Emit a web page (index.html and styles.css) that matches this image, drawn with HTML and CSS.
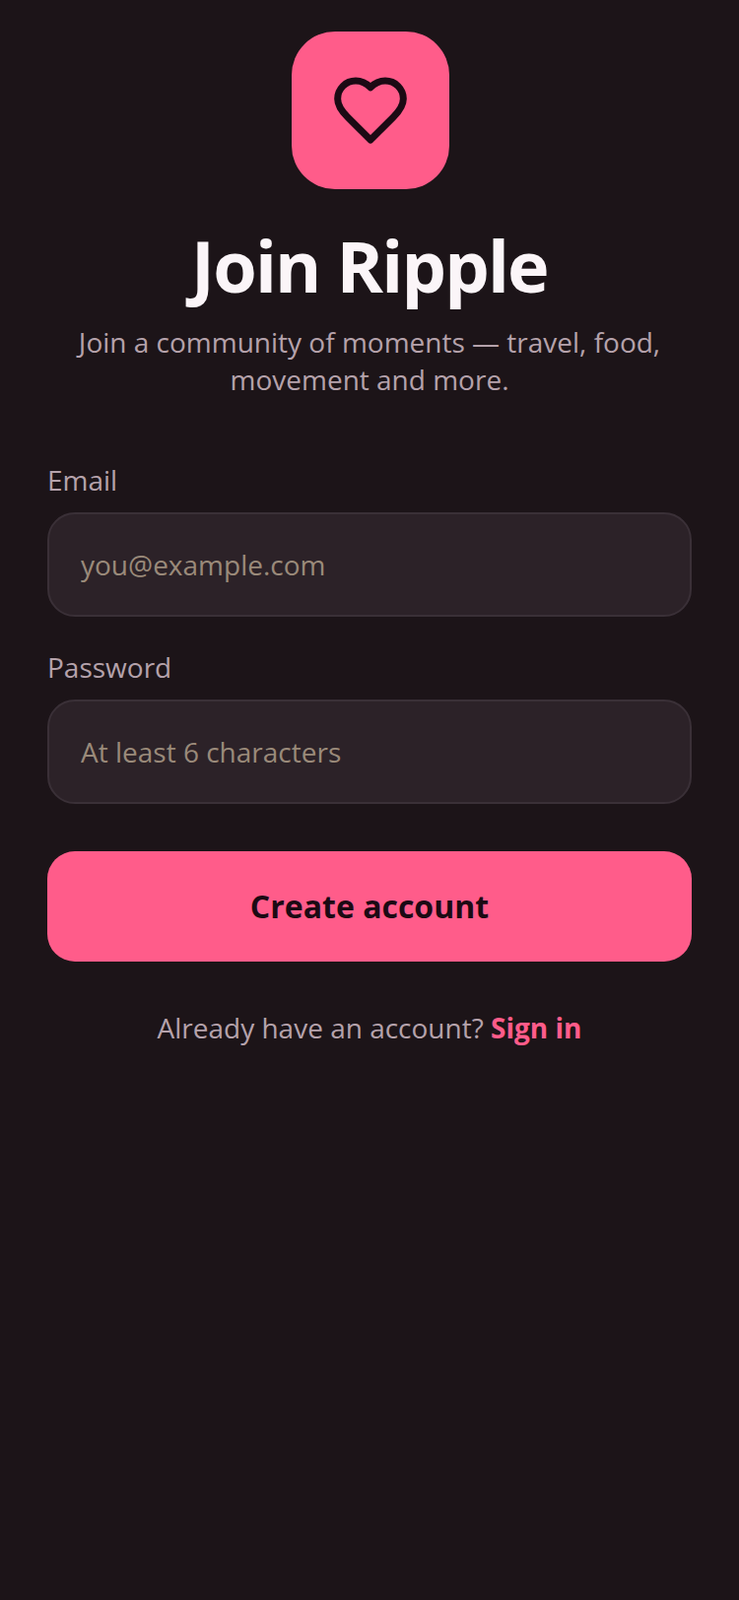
FILE: index.html
```html
<!doctype html>
<html lang="en">
<head>
    <meta charset="utf-8">
    <meta name="viewport" content="width=device-width, initial-scale=1.0">
    <title>Join Ripple</title>
    <link rel="stylesheet" href="styles.css">
</head>

<body>
    <div class="container">
        <div class="logo">
            <svg width="80" height="80" viewBox="0 0 24 24" fill="none" stroke="currentColor" stroke-width="2.1" stroke-linecap="round" stroke-linejoin="round">
                <path d="M19 14c1.49-1.46 3-3.21 3-5.5A5.5 5.5 0 0 0 16.5 3c-1.76 0-3 .5-4.5 2-1.5-1.5-2.74-2-4.5-2A5.5 5.5 0 0 0 2 8.5c0 2.3 1.5 4.05 3 5.5l7 7Z"/>
            </svg>
        </div>
        <h1>Join Ripple</h1>
        <p class="subtitle">Join a community of moments — travel, food, movement and more.</p>

        <div class="form-group">
            <label for="email">Email</label>
            <input type="email" id="email" placeholder="you@example.com">
        </div>
        <div class="form-group">
            <label for="password">Password</label>
            <input type="password" id="password" placeholder="At least 6 characters">
        </div>

        <button class="submit-button">Create account</button>
        <p class="switch">Already have an account? <a href="#">Sign in</a></p>
    </div>
</body>
</html>
```

FILE: styles.css
```css
* {
    box-sizing: border-box;
}
body {
    font-family: "Open Sans", "Noto Sans", sans-serif;
    background-color: #1c1418;
    color: #fbf5f8;
    margin: 0;
    min-height: 1624px;
}
.container {
    padding: 32px 48px 0;
    display: flex;
    flex-direction: column;
}
.logo {
    width: 160px;
    height: 160px;
    margin-left: 248px;
    border-radius: 44px;
    background-color: #ff5c8a;
    color: #1c0a14;
    display: flex;
    align-items: center;
    justify-content: center;
}
h1 {
    margin: 33px 0 15px;
    font-size: 72px;
    line-height: 88px;
    font-weight: 700;
    text-align: center;
    letter-spacing: -1.8px;
}
.subtitle {
    margin: 0 0 64px;
    font-size: 28px;
    line-height: 38px;
    text-align: center;
    color: #b5a2ab;
}
.form-group {
    margin-bottom: 32px;
}
label {
    display: block;
    margin-bottom: 14px;
    font-size: 28px;
    line-height: 38px;
    color: #b5a2ab;
}
input {
    display: block;
    width: 100%;
    height: 106px;
    padding: 0 32px;
    background-color: #2c2228;
    border: 2px solid #3a3037;
    border-radius: 28px;
    font-family: inherit;
    font-size: 28px;
    color: #fbf5f8;
}
input::placeholder {
    color: #9a8a7a;
    opacity: 1;
}
.submit-button {
    height: 112px;
    margin-top: 16px;
    padding-bottom: 2px;
    border: none;
    border-radius: 28px;
    background-color: #ff5c8a;
    color: #1c0a14;
    font-family: inherit;
    font-size: 32px;
    font-weight: 700;
}
.switch {
    margin: 48px 0 0;
    font-size: 28px;
    line-height: 38px;
    text-align: center;
    color: #b5a2ab;
}
.switch a {
    color: #ff5c8a;
    font-weight: 700;
    text-decoration: none;
}
```
